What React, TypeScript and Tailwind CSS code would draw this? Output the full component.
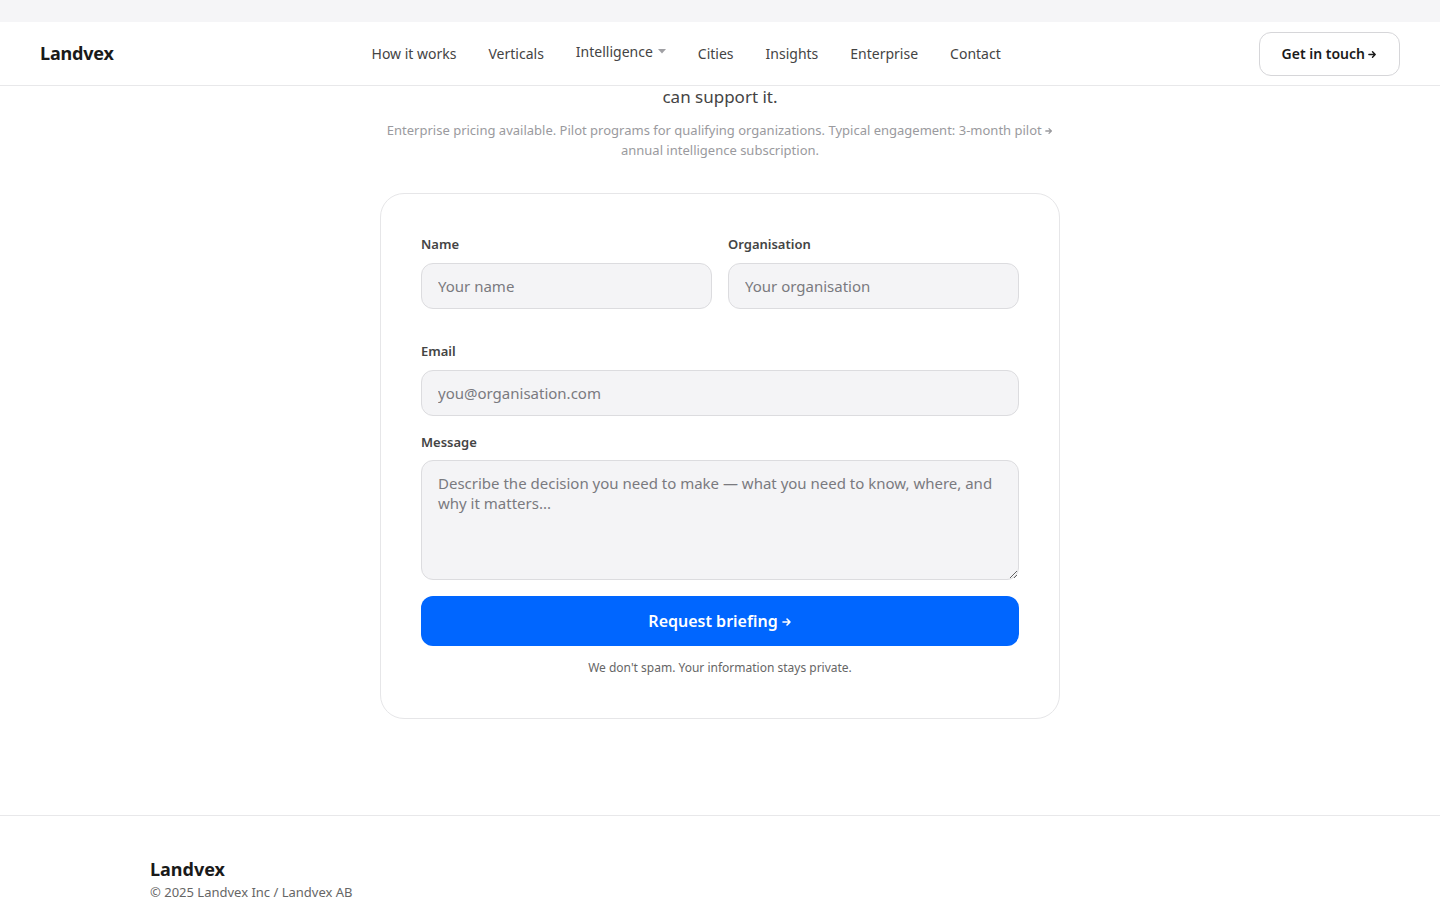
import { useState, FormEvent } from 'react';

const navLinks = ['How it works', 'Verticals', 'Intelligence', 'Cities', 'Insights', 'Enterprise', 'Contact'];

const inputClass =
    'w-full h-[46px] px-4 bg-[#f4f4f6] border border-[#dcdcdf] rounded-xl text-[15px] text-[#222] placeholder:text-[#7a7a7f] focus:outline-none focus:border-[#0066ff]';

const labelClass = 'block mb-[10px] text-[13px] leading-[18px] font-semibold text-[#444]';

const Arrow = ({ size = 10, className = '' }: { size?: number; className?: string }) => (
    <svg width={size} height={size} viewBox="0 0 10 10" fill="none" className={className}>
        <path d="M1 5h7M5 2l3 3-3 3" stroke="currentColor" strokeWidth="1.6" strokeLinecap="round" strokeLinejoin="round" />
    </svg>
);

const App = () => {
    const [name, setName] = useState('');
    const [org, setOrg] = useState('');
    const [email, setEmail] = useState('');
    const [message, setMessage] = useState('');

    const handleSubmit = (e: FormEvent) => {
        e.preventDefault();
    };

    return (
        <div className="min-h-screen bg-white text-[#222] font-['Noto_Sans',_'Open_Sans',_sans-serif]">
            <div className="h-[22px] bg-[#f5f5f7]" />

            <header className="h-[64px] bg-white border-b border-[#e8e8ea] flex items-center justify-between px-10">
                <a href="#" className="text-[18px] font-bold text-[#1a1a1a] tracking-[-0.01em]">Landvex</a>
                <nav className="flex items-center gap-8 text-[14px] text-[#444]">
                    {navLinks.map((link) =>
                        link === 'Intelligence' ? (
                            <a key={link} href="#" className="flex items-center gap-[5px] -mt-1">
                                {link}
                                <svg width="8" height="5" viewBox="0 0 8 5" className="text-[#a0a0a4]">
                                    <path d="M0 0h8L4 4.5z" fill="currentColor" />
                                </svg>
                            </a>
                        ) : (
                            <a key={link} href="#">{link}</a>
                        )
                    )}
                </nav>
                <a
                    href="#"
                    className="h-11 px-[22px] flex items-center gap-[3px] border border-[#d6d6d9] rounded-xl text-[14px] font-semibold text-[#1a1a1a]"
                >
                    Get in touch <Arrow size={9} className="mt-[1px]" />
                </a>
            </header>

            <main className="flex flex-col items-center">
                <p className="text-[17px] text-[#444] leading-[22px]">can support it.</p>
                <p className="mt-[12px] max-w-[680px] text-center text-[13px] leading-[20px] text-[#9a9a9e]">
                    Enterprise pricing available. Pilot programs for qualifying organizations. Typical engagement: 3-month pilot{' '}
                    <Arrow size={8} className="inline-block align-middle -mt-[2px]" />
                    <br />
                    annual intelligence subscription.
                </p>

                <form
                    onSubmit={handleSubmit}
                    className="mt-[33px] mb-[96px] w-[680px] border border-[#e6e6e8] rounded-3xl px-10 pt-[41px] pb-[42px] bg-white"
                >
                    <div className="grid grid-cols-2 gap-4">
                        <div>
                            <label htmlFor="name" className={labelClass}>Name</label>
                            <input
                                id="name"
                                type="text"
                                value={name}
                                onChange={(e) => setName(e.target.value)}
                                placeholder="Your name"
                                className={inputClass}
                            />
                        </div>
                        <div>
                            <label htmlFor="org" className={labelClass}>Organisation</label>
                            <input
                                id="org"
                                type="text"
                                value={org}
                                onChange={(e) => setOrg(e.target.value)}
                                placeholder="Your organisation"
                                className={inputClass}
                            />
                        </div>
                    </div>

                    <div className="mt-[33px]">
                        <label htmlFor="email" className={labelClass}>Email</label>
                        <input
                            id="email"
                            type="email"
                            value={email}
                            onChange={(e) => setEmail(e.target.value)}
                            placeholder="you@organisation.com"
                            className={inputClass}
                        />
                    </div>

                    <div className="mt-[17px]">
                        <label htmlFor="message" className="block mb-[9px] text-[13px] leading-[18px] font-semibold text-[#444]">Message</label>
                        <textarea
                            id="message"
                            value={message}
                            onChange={(e) => setMessage(e.target.value)}
                            placeholder="Describe the decision you need to make — what you need to know, where, and why it matters..."
                            className="block w-full h-[120px] px-4 py-3 bg-[#f4f4f6] border border-[#dcdcdf] rounded-xl text-[15px] leading-[20px] text-[#222] placeholder:text-[#7a7a7f] focus:outline-none focus:border-[#0066ff]"
                        />
                    </div>

                    <button
                        type="submit"
                        className="mt-4 w-full h-[50px] bg-[#0066ff] hover:bg-[#0058e0] text-white text-[16px] font-semibold rounded-xl flex items-center justify-center gap-[4px]"
                    >
                        Request briefing <Arrow size={10} className="mt-[2px]" />
                    </button>

                    <p className="mt-[14px] text-center text-[12px] leading-[16px] text-[#666]">
                        We don't spam. Your information stays private.
                    </p>
                </form>
            </main>

            <footer className="border-t border-[#e8e8ea]">
                <div className="max-w-[1140px] mx-auto pt-[41px] pb-10">
                    <div className="text-[18px] font-bold text-[#1a1a1a] leading-[24px]">Landvex</div>
                    <div className="mt-[2px] text-[13px] text-[#666]">© 2025 Landvex Inc / Landvex AB</div>
                </div>
            </footer>
        </div>
    );
};

export default App;
